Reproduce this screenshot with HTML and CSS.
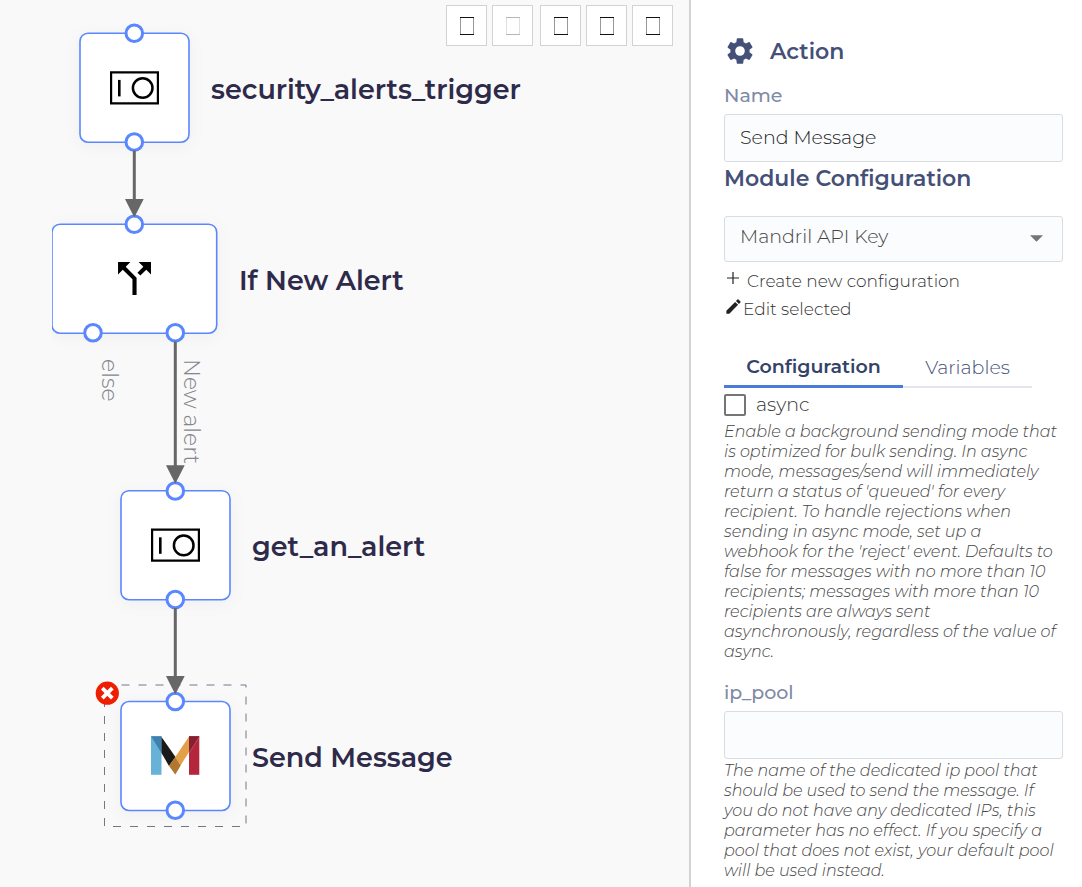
FILE: index.html
```html
<!DOCTYPE html>
<html lang="en">
<head>
<meta charset="utf-8">
<meta name="viewport" content="width=device-width, initial-scale=1">
<title>Workflow editor</title>
<link rel="stylesheet" href="styles.css">
</head>
<body>
<div class="editor">
  <main class="canvas">
    <div class="toolbar">
      <button class="tool" type="button" aria-label="Undo"><svg class="tool-icon" viewBox="0 0 14 18"><path d="M.5 1v16M13.5 1v16" class="side"/><path d="M0 .5h14M0 17.5h14"/></svg></button>
      <button class="tool" type="button" aria-label="Redo" disabled><svg class="tool-icon" viewBox="0 0 14 18"><path d="M.5 1v16M13.5 1v16" class="side"/><path d="M0 .5h14M0 17.5h14"/></svg></button>
      <button class="tool tool-group" type="button" aria-label="Zoom in"><svg class="tool-icon" viewBox="0 0 14 18"><path d="M.5 1v16M13.5 1v16" class="side"/><path d="M0 .5h14M0 17.5h14"/></svg></button>
      <button class="tool" type="button" aria-label="Zoom out"><svg class="tool-icon" viewBox="0 0 14 18"><path d="M.5 1v16M13.5 1v16" class="side"/><path d="M0 .5h14M0 17.5h14"/></svg></button>
      <button class="tool" type="button" aria-label="Fit"><svg class="tool-icon" viewBox="0 0 14 18"><path d="M.5 1v16M13.5 1v16" class="side"/><path d="M0 .5h14M0 17.5h14"/></svg></button>
    </div>
    <svg class="diagram" width="680" height="880" viewBox="0 0 680 880">
      <defs>
        <g id="switch" fill="none" stroke="#000">
          <path stroke-width="2.2" d="M1.1 1.1h46.8v31H1.1z"/>
          <path stroke-width="2.6" d="M9.3 8.7v16.5"/>
          <circle stroke-width="2.5" cx="32.7" cy="16.8" r="9.8"/>
        </g>
        <clipPath id="clip"><path d="M52 200h200v160H52z"/></clipPath>
      </defs>

      <rect class="node" x="80" y="33.2" width="109" height="109" rx="8"/>
      <g clip-path="url(#clip)"><rect class="node" x="52" y="224.2" width="164.7" height="109" rx="8"/></g>
      <rect class="node" x="121" y="490.7" width="109" height="109" rx="8"/>
      <path class="selection" d="M104.5 685H246V826.500H104.500z"/>
      <rect class="node" x="121" y="701.5" width="109" height="109" rx="8"/>

      <g class="ports">
        <circle cx="134.300" cy="33.300" r="8.300"/><circle cx="134.300" cy="142" r="8.300"/>
        <circle cx="134.300" cy="224.300" r="8.300"/><circle cx="93" cy="332.800" r="8.300"/><circle cx="175.300" cy="332.800" r="8.300"/>
        <circle cx="175.300" cy="491" r="8.300"/><circle cx="175.300" cy="599.500" r="8.300"/>
        <circle cx="175.300" cy="701.500" r="8.300"/><circle cx="175.300" cy="810.200" r="8.300"/>
      </g>

      <g class="edges">
        <path d="M134.300 150.500V202"/><path class="head" d="M125 199h18.700l-9.400 18.500z"/>
        <path d="M175.300 341.500V468"/><path class="head" d="M166 465.300h18.700l-9.400 18.500z"/>
        <path d="M175.300 608V680"/><path class="head" d="M166 676h18.700l-9.400 18.500z"/>
      </g>

      <use href="#switch" x="110" y="71.200"/>
      <use href="#switch" x="151" y="528.600"/>
      <path transform="translate(109.800 253.800) scale(2.060)" d="M14 4l2.290 2.290-2.880 2.880 1.420 1.420 2.880-2.880L20 10V4zm-4 0H4v6l2.290-2.290 4.710 4.700V20h2v-8.410l-5.290-5.300z"/>

      <g>
        <path fill="#68b2d8" d="M151 736.200h10.500v38.600H151z"/>
        <path fill="#3f80ae" d="M151 736.200h10.500V753z"/>
        <path fill="#1c1a19" d="M161.500 737l14 20-6.500 9-7.500-13z"/>
        <path fill="#e4a048" d="M189 736.500V752l-8.500 13.500-5.200-8.500z"/>
        <path fill="#b0772f" d="M175.300 757l5.400 8.600-5.400 9-6.300-8.600z"/>
        <path fill="#b4263c" d="M189 736.200h10.300v38.600H189z"/>
        <path fill="#84202f" d="M189 736.200h10.300L189 753z"/>
        <path stroke="#c8697a" stroke-width=".6" d="M199.300 737L189 753"/>
      </g>

      <circle cx="107.300" cy="693.200" r="11.600" fill="#f01e00"/>
      <path stroke="#fff" stroke-width="3.800" d="M102.300 688.200l10 10M112.300 688.200l-10 10"/>

      <g class="names">
        <text x="211" y="99">security_alerts_trigger</text>
        <text x="239" y="290">If New Alert</text>
        <text x="252" y="556">get_an_alert</text>
        <text x="252" y="767">Send Message</text>
      </g>
      <g class="branches">
        <text transform="translate(102 359) rotate(90)">else</text>
        <text transform="translate(184 359) rotate(90)">New alert</text>
      </g>
    </svg>
  </main>

  <aside class="panel">
    <h1 class="panel-title">
      <svg class="gear" viewBox="0 0 24 24"><path d="M19.140 12.940c.040-.3.060-.610.060-.940 0-.320-.020-.640-.070-.940l2.030-1.580c.180-.140.230-.410.120-.610l-1.920-3.320c-.120-.220-.370-.290-.590-.220l-2.390.960c-.5-.380-1.030-.7-1.620-.940l-.360-2.540c-.040-.240-.240-.410-.480-.410h-3.840c-.240 0-.430.170-.470.410l-.360 2.540c-.590.240-1.130.570-1.620.940l-2.390-.960c-.220-.080-.470 0-.590.220L2.740 8.870c-.120.210-.080.470.120.610l2.030 1.580c-.050.3-.090.630-.090.940s.020.640.070.940l-2.030 1.580c-.180.140-.230.410-.120.610l1.920 3.320c.120.220.370.290.590.220l2.390-.960c.5.380 1.030.7 1.620.940l.360 2.540c.050.240.240.410.480.410h3.840c.240 0 .440-.170.470-.410l.360-2.540c.590-.240 1.130-.560 1.620-.940l2.390.960c.220.080.470 0 .590-.220l1.920-3.320c.120-.220.070-.470-.120-.610zM12 15.600A3.600 3.600 0 1 1 12 8.400a3.600 3.600 0 0 1 0 7.200z"/></svg>
      Action
    </h1>
    <label class="label" for="name">Name</label>
    <input class="field" id="name" type="text" value="Send Message">

    <h2 class="section-title" id="module">Module Configuration</h2>
    <div class="select-wrap">
      <select class="field select" aria-labelledby="module"><option>Mandril API Key</option></select>
      <svg class="caret" viewBox="0 0 12 6"><path d="M0 0h12L6 6z"/></svg>
    </div>
    <div class="links">
      <button class="link" type="button"><svg class="plus" viewBox="0 0 18 18"><path d="M9 0v12M3 6h12"/></svg>Create new configuration</button>
      <button class="link" type="button"><svg class="pencil" viewBox="0 0 24 24"><path d="M3 17.250V21h3.750L17.810 9.940l-3.750-3.750zM20.710 7.040a1 1 0 0 0 0-1.410l-2.340-2.340a1 1 0 0 0-1.410 0l-1.830 1.830 3.750 3.750z"/></svg>Edit selected</button>
    </div>

    <div class="tabs" role="tablist">
      <button class="tab active" type="button" role="tab" aria-selected="true">Configuration</button>
      <button class="tab" type="button" role="tab" aria-selected="false">Variables</button>
    </div>

    <label class="check"><input class="box" type="checkbox">async</label>
    <p class="help">Enable a background sending mode that<br>is optimized for bulk sending. In async<br>mode, messages/send will immediately<br>return a status of 'queued' for every<br>recipient. To handle rejections when<br>sending in async mode, set up a<br>webhook for the 'reject' event. Defaults to<br>false for messages with no more than 10<br>recipients; messages with more than 10<br>recipients are always sent<br>asynchronously, regardless of the value of<br>async.</p>

    <label class="label pool-label" for="pool">ip_pool</label>
    <input class="field" id="pool" type="text">
    <p class="help">The name of the dedicated ip pool that<br>should be used to send the message. If<br>you do not have any dedicated IPs, this<br>parameter has no effect. If you specify a<br>pool that does not exist, your default pool<br>will be used instead.</p>
  </aside>
</div>
</body>
</html>
```

FILE: styles.css
```css
* { box-sizing: border-box; }

body {
  margin: 0;
  font-family: Montserrat, Inter, sans-serif;
  font-weight: 300;
  color: #333;
  background: #fff;
}

button, input, select { font: inherit; color: inherit; }

.editor {
  display: grid;
  grid-template-columns: minmax(0, 1fr) 393px;
  height: 100vh;
  overflow: hidden;
}

.canvas {
  position: relative;
  overflow: hidden;
  background: #f9f9f9;
}

.diagram { position: absolute; top: 0; left: 0; }

.toolbar {
  position: relative;
  z-index: 1;
  display: flex;
  justify-content: flex-end;
  gap: 5px;
  padding: 5px 16px;
}

.tool {
  display: grid;
  place-items: center;
  width: 41px;
  height: 41px;
  padding: 0;
  border: 1px solid #d3d3d3;
  background: #fff;
}
.tool-group { margin-left: 2px; }
.tool-icon { width: 14px; height: 18px; fill: none; stroke: #111; }
.tool-icon .side { stroke: #999; }
.tool:disabled .tool-icon { opacity: .3; }

.node {
  fill: #fff;
  stroke: #5a87ff;
  stroke-width: 1.6px;
  filter: drop-shadow(0 3px 8px rgba(0, 0, 0, .04));
}
.ports circle { fill: #fff; stroke: #5a87ff; stroke-width: 3px; }
.edges path { fill: none; stroke: #676767; stroke-width: 3px; }
.edges .head { fill: #676767; stroke: none; }
.selection { fill: none; stroke: #77758c; stroke-width: 1px; stroke-dasharray: 8 9; }
.names text { font-size: 27px; font-weight: 600; fill: #2e2a4a; }
.branches text { font-size: 22px; fill: #85858c; }

.panel {
  padding: 37px 19px 0 33px;
  border-left: 2px solid #d3d3d3;
  overflow: hidden;
}

.panel-title {
  display: flex;
  align-items: center;
  gap: 14px;
  margin: 0 0 19px;
  font-size: 22px;
  line-height: 30px;
  font-weight: 600;
  color: #445078;
}
.gear { width: 32px; height: 32px; margin: -2px 0 0; fill: #445078; }

.label {
  display: block;
  margin-bottom: 8px;
  font-size: 19px;
  line-height: 20px;
  font-weight: 500;
  color: #7f8ba5;
}

.field {
  display: block;
  width: 100%;
  height: 48px;
  padding: 0 15px 2px;
  border: 1px solid #d9dce0;
  border-radius: 3px;
  background: #fbfcfe;
  font-size: 19px;
  color: #222;
}

.section-title {
  margin: 3px 0 23px;
  font-size: 22px;
  line-height: 28px;
  font-weight: 600;
  color: #445078;
}

.select-wrap { position: relative; }
.select { appearance: none; height: 46px; padding-bottom: 6px; color: #444; }
.caret {
  position: absolute;
  top: 19px;
  right: 20px;
  width: 13px;
  height: 7px;
  fill: #757575;
  pointer-events: none;
}

.links { display: grid; justify-items: start; padding-top: 5px; }
.link {
  display: flex;
  align-items: center;
  padding: 0;
  border: 0;
  background: none;
  font-size: 17px;
  line-height: 28px;
  color: #333;
}
.plus { width: 18px; height: 18px; margin-right: 5px; fill: none; stroke: #222; stroke-width: 1.2px; }
.pencil { width: 19px; height: 24px; padding-bottom: 5px; fill: #222; }

.tabs { display: flex; margin: 25px 31px 6px 0; }
.tab {
  flex: 129;
  height: 40px;
  padding: 0;
  border: 0;
  border-bottom: 2px solid #e4e6ee;
  background: none;
  font-size: 19px;
  color: #445078;
}
.tab.active {
  flex: 179;
  border-bottom: 3px solid #4a7bd8;
  font-weight: 600;
  color: #344268;
}

.check {
  display: flex;
  align-items: center;
  gap: 10px;
  font-size: 19px;
  line-height: 22px;
}
.box {
  appearance: none;
  width: 22px;
  height: 22px;
  margin: 0;
  border: 2px solid #757575;
  border-radius: 2px;
}

.help {
  margin: 6px 0 0;
  font-size: 16px;
  line-height: 20px;
  font-style: italic;
  white-space: nowrap;
  color: #444;
}
.field + .help { margin-top: 2px; }
.pool-label { margin: 21px 0 8px; }
```
